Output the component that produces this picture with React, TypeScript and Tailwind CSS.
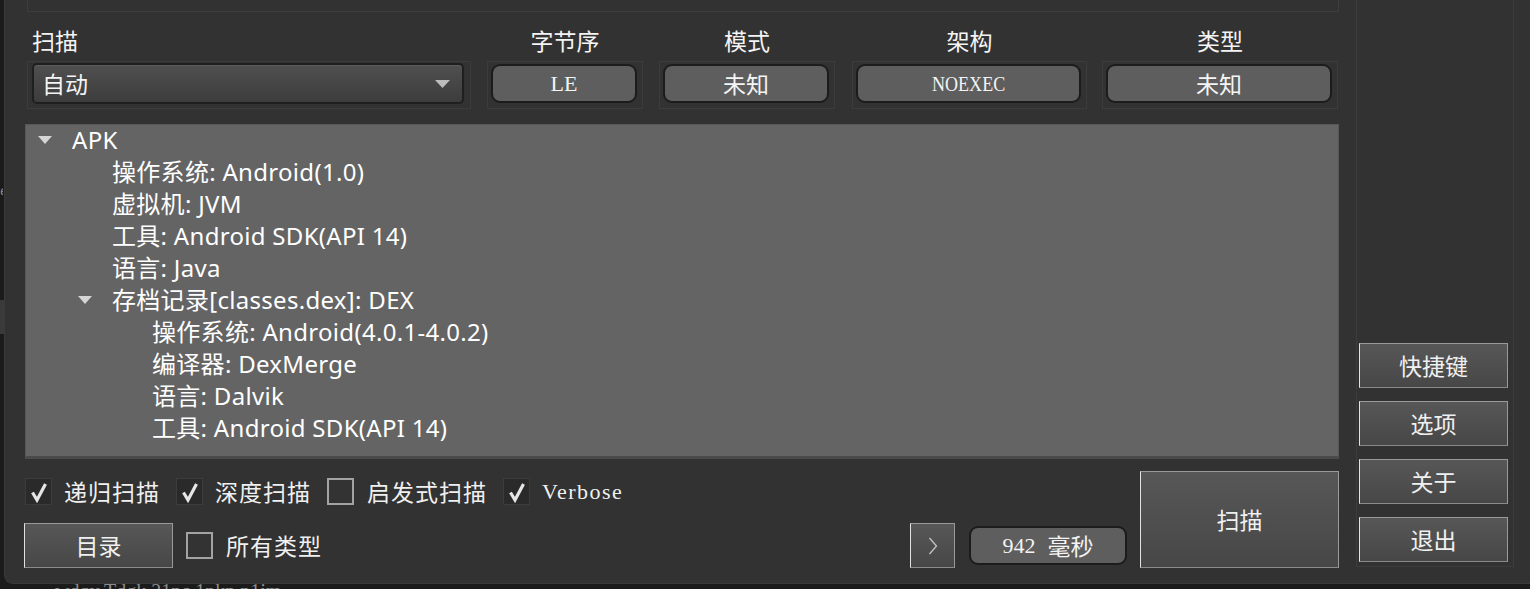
import React from "react";

const CJK = "font-['Noto_Sans_CJK_SC',sans-serif]";
const SERIF = "font-['Liberation_Serif','Noto_Sans_CJK_SC',serif]";

function GrayButton({ children, className = "" }: { children: React.ReactNode; className?: string }) {
  return (
    <div
      className={
        "flex items-center justify-center border border-[#9a9a9a] border-l-[#e2e2e2] border-b-[#8a8a8a] bg-linear-to-b from-[#575757] to-[#474747] text-[#f0f0f0] text-[23px] leading-none " +
        CJK +
        " " +
        className
      }
    >
      {children}
    </div>
  );
}

function Check() {
  return (
    <div className="w-[27px] h-[27px] shrink-0 bg-[#2a2a2a] border border-[#3c3c3c] flex items-center justify-center">
      <svg width="20" height="22" viewBox="0 0 20 22">
        <path d="M3.5 11.5 L8 19 L16.5 3" fill="none" stroke="#e6e6e6" strokeWidth="3.2" strokeLinejoin="miter" />
      </svg>
    </div>
  );
}

function Uncheck() {
  return <div className="w-[27px] h-[27px] shrink-0 border-2 border-[#a3a3a3] bg-[#333333]" />;
}

function RoundBtn({ children }: { children: React.ReactNode }) {
  return (
    <div className="h-full w-full rounded-[9px] border-2 border-[#1c1c1c] bg-[#5e5e5e] flex items-center justify-center text-[#f4f4f4] leading-none">
      {children}
    </div>
  );
}

function Frame({ children }: { children: React.ReactNode }) {
  return <div className="h-[48px] border border-[#3c3c3c] pt-[2px] pl-[3px] pr-[5px] pb-[5px]">{children}</div>;
}

function Arrow() {
  return (
    <svg width="14" height="8" viewBox="0 0 14 8" className="shrink-0">
      <path d="M0 0 L14 0 L7 8 Z" fill="#d6d6d6" />
    </svg>
  );
}

function TreeRow({ indent, arrow, text }: { indent: string; arrow?: boolean; text: string }) {
  return (
    <div className={"h-[32px] flex items-center " + indent}>
      {arrow && (
        <div className="w-[34px] flex items-center">
          <Arrow />
        </div>
      )}
      <span className="whitespace-pre">{text}</span>
    </div>
  );
}

export default function App() {
  return (
    <div className="w-[1530px] h-[589px] overflow-hidden bg-[#1b1b1b] flex">
      {/* left dark strip */}
      <div className="w-[4px] shrink-0 flex flex-col">
        <div className="h-[184px]" />
        <div className="h-[11px] w-[3px] text-[#8a8a8a] text-[14px] leading-none overflow-hidden">e</div>
        <div className="h-[105px]" />
        <div className="h-[34px] bg-[#3a3a3a]" />
      </div>
      <div className="flex-1 flex flex-col">
        {/* window */}
        <div className="h-[584px] bg-[#323232] rounded-bl-[9px] border-l border-b border-[#3a3a3a] flex">
          {/* main area */}
          <div className="pl-[20px] w-[1335px] flex flex-col">
            {/* top groupbox remnant */}
            <div className="ml-[2px] w-[1312px] h-[12px] border-x border-b border-[#3d3d3d]" />
            {/* labels + controls */}
            <div className={"ml-[2px] mt-[16px] flex text-[23px] text-[#f4f4f4] " + CJK}>
              <div className="w-[444px] flex flex-col">
                <div className="h-[24px] leading-[24px] pl-[5px]">扫描</div>
                <div className="mt-[9px] h-[48px] border border-[#3c3c3c] pt-[1px] pl-[4px] pr-[6px] pb-[4px]">
                  <div className="h-full rounded-[5px] border-2 border-[#1f1f1f] bg-linear-to-b from-[#4f4f4f] to-[#3d3d3d] shadow-[inset_0_1px_0_#5c5c5c] flex items-center pl-[8px] pr-[12px]">
                    <span className="flex-1 leading-none">自动</span>
                    <svg width="15" height="8" viewBox="0 0 15 8">
                      <path d="M0 0 L15 0 L7.5 8 Z" fill="#bdbdbd" />
                    </svg>
                  </div>
                </div>
              </div>
              <div className="w-[156px] ml-[16px] flex flex-col">
                <div className="h-[24px] leading-[24px] text-center">字节序</div>
                <div className="mt-[9px]">
                  <Frame>
                    <RoundBtn>
                      <span className={"text-[22px] " + SERIF}>LE</span>
                    </RoundBtn>
                  </Frame>
                </div>
              </div>
              <div className="w-[176px] ml-[16px] flex flex-col">
                <div className="h-[24px] leading-[24px] text-center">模式</div>
                <div className="mt-[9px]">
                  <Frame>
                    <RoundBtn>未知</RoundBtn>
                  </Frame>
                </div>
              </div>
              <div className="w-[235px] ml-[17px] flex flex-col">
                <div className="h-[24px] leading-[24px] text-center">架构</div>
                <div className="mt-[9px]">
                  <Frame>
                    <RoundBtn>
                      <span className={"inline-block text-[22px] scale-x-[0.82] " + SERIF}>NOEXEC</span>
                    </RoundBtn>
                  </Frame>
                </div>
              </div>
              <div className="w-[236px] ml-[15px] flex flex-col">
                <div className="h-[24px] leading-[24px] text-center">类型</div>
                <div className="mt-[9px]">
                  <Frame>
                    <RoundBtn>未知</RoundBtn>
                  </Frame>
                </div>
              </div>
            </div>
            {/* tree */}
            <div
              className={
                "mt-[15px] w-[1314px] h-[335px] bg-[#646464] border border-[#575757] border-b-[3px] border-b-[#4a4a4a] text-white text-[24px] leading-[32px] tracking-[0.3px] font-['Noto_Sans','Noto_Sans_CJK_SC',sans-serif]"
              }
            >
              <div className="-mt-[1px]">
                <TreeRow indent="pl-[12px]" arrow text="APK" />
                <TreeRow indent="pl-[86px]" text="操作系统: Android(1.0)" />
                <TreeRow indent="pl-[86px]" text="虚拟机: JVM" />
                <TreeRow indent="pl-[86px]" text="工具: Android SDK(API 14)" />
                <TreeRow indent="pl-[86px]" text="语言: Java" />
                <TreeRow indent="pl-[52px]" arrow text="存档记录[classes.dex]: DEX" />
                <TreeRow indent="pl-[126px]" text="操作系统: Android(4.0.1-4.0.2)" />
                <TreeRow indent="pl-[126px]" text="编译器: DexMerge" />
                <TreeRow indent="pl-[126px]" text="语言: Dalvik" />
                <TreeRow indent="pl-[126px]" text="工具: Android SDK(API 14)" />
              </div>
            </div>
            {/* bottom area */}
            <div className="mt-[12px] h-[97px] flex">
              <div className={"w-[1102px] flex flex-col text-[23px] text-[#f0f0f0] " + CJK}>
                <div className="mt-[7px] h-[27px] flex items-center">
                  <Check />
                  <span className="ml-[12px] leading-none tracking-[1px]">递归扫描</span>
                  <div className="ml-[16px]">
                    <Check />
                  </div>
                  <span className="ml-[12px] leading-none tracking-[1px]">深度扫描</span>
                  <div className="ml-[16px]">
                    <Uncheck />
                  </div>
                  <span className="ml-[13px] leading-none tracking-[1px]">启发式扫描</span>
                  <div className="ml-[16px]">
                    <Check />
                  </div>
                  <span className={"ml-[12px] leading-none text-[22px] tracking-[1.5px] " + SERIF}>Verbose</span>
                </div>
                <div className="mt-[18px] h-[45px] flex items-center">
                  <GrayButton className="ml-[-1px] w-[149px] h-[45px]">目录</GrayButton>
                  <div className="ml-[13px]">
                    <Uncheck />
                  </div>
                  <span className="ml-[13px] leading-none tracking-[1px]">所有类型</span>
                  <div className="flex-1" />
                  <GrayButton className="w-[45px] h-[45px]">
                    <svg width="10" height="18" viewBox="0 0 10 18">
                      <path d="M1.5 1 L8.5 9 L1.5 17" fill="none" stroke="#c4c4c4" strokeWidth="1.3" />
                    </svg>
                  </GrayButton>
                  <div className="ml-[14px] w-[158px] h-[39px]">
                    <RoundBtn>
                      <span className={"text-[22px] " + SERIF}>942</span>
                      <span className="ml-[12px]">毫秒</span>
                    </RoundBtn>
                  </div>
                </div>
              </div>
              <GrayButton className="ml-[13px] w-[199px] h-[97px]">扫描</GrayButton>
            </div>
          </div>
          {/* right panel */}
          <div className="ml-[16px] w-[158px] h-[567px] border-x border-b border-[#3c3c3c] flex flex-col justify-end gap-[13px] pb-[4px] pl-[2px]">
            <GrayButton className="w-[149px] h-[45px]">快捷键</GrayButton>
            <GrayButton className="w-[149px] h-[45px]">选项</GrayButton>
            <GrayButton className="w-[149px] h-[45px]">关于</GrayButton>
            <GrayButton className="w-[149px] h-[45px]">退出</GrayButton>
          </div>
        </div>
        {/* bottom strip with clipped text */}
        <div className="h-[5px] overflow-hidden pl-[51px]">
          <div className={"text-[20px] leading-[20px] text-[#8c8c8c] mt-[-3px] whitespace-pre " + SERIF}>wdqy Tdgk 21pc 1pkp p1jm</div>
        </div>
      </div>
    </div>
  );
}
